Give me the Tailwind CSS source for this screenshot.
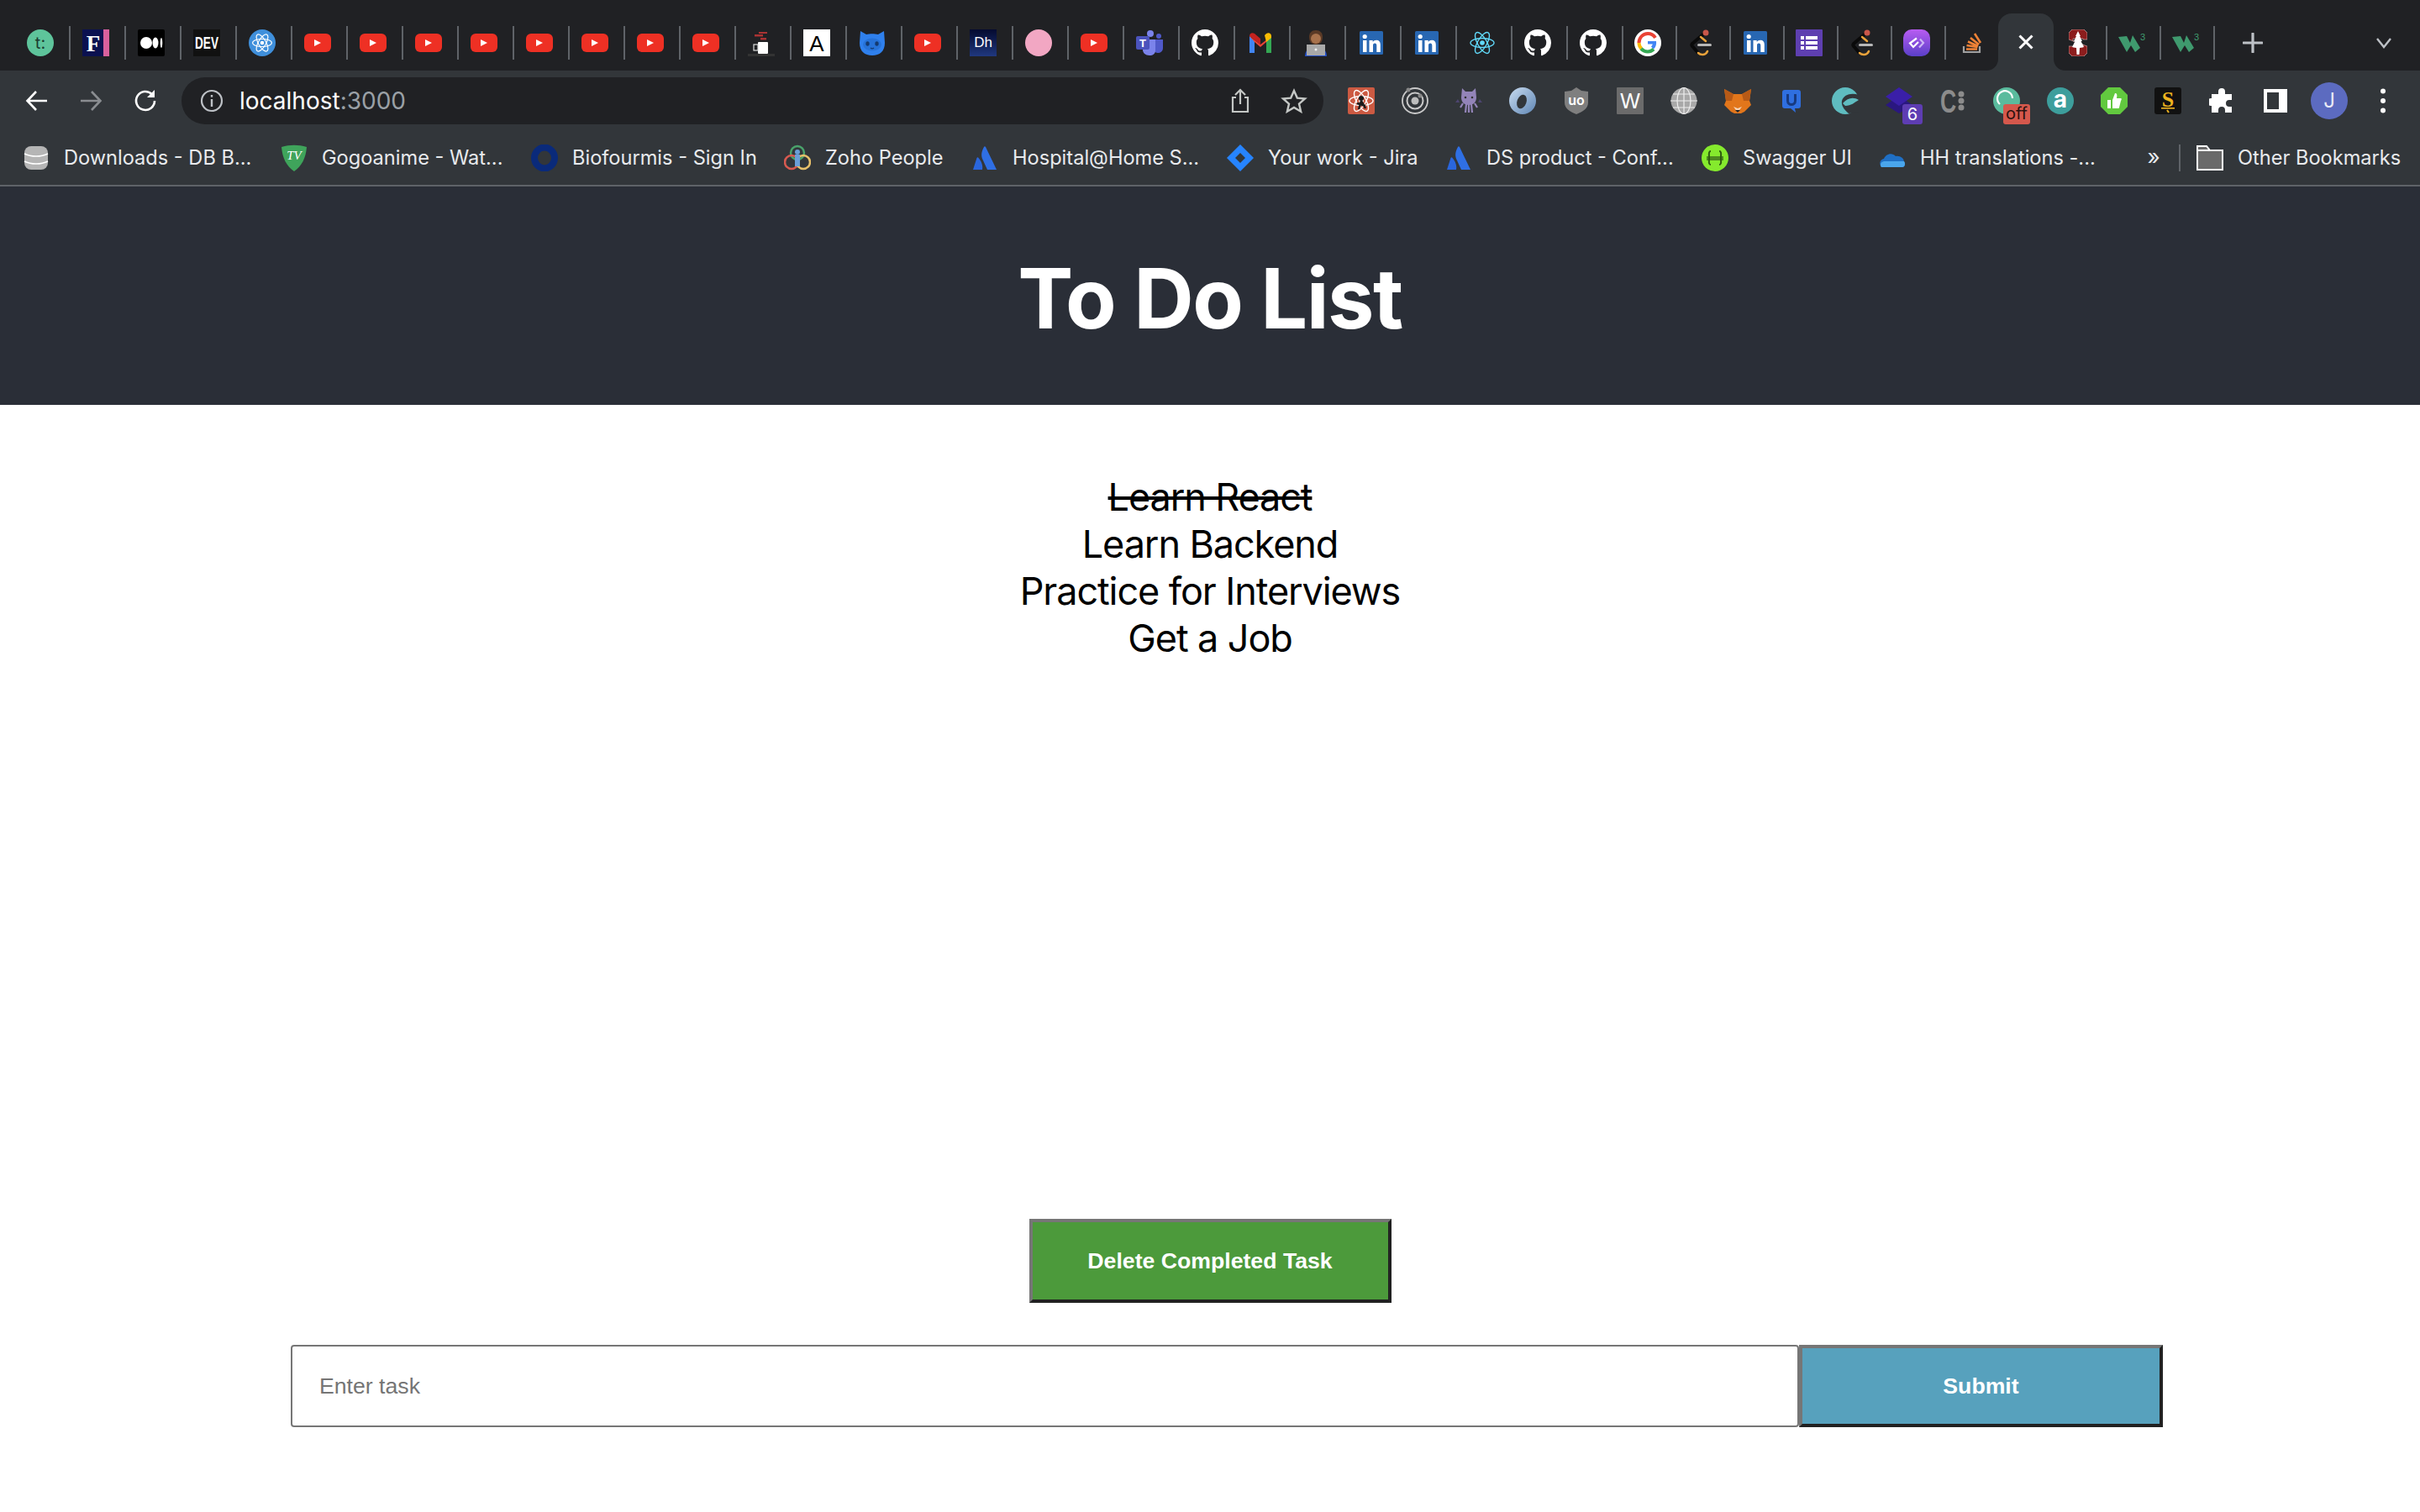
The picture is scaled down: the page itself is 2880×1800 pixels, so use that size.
<!DOCTYPE html>
<html lang="en">
<head>
<meta charset="UTF-8">
<title>To Do List</title>
<script src="https://cdn.jsdelivr.net/npm/@tailwindcss/browser@4"></script>
</head>
<body class="bg-white w-[2880px] h-[1800px] overflow-hidden font-['Inter',sans-serif]">

<svg class="hidden">
  <symbol id="yt" viewBox="0 0 32 32"><rect x="0" y="5" width="32" height="22" rx="6" fill="#ee3024"/><path d="M12 12l8 4-8 4z" fill="#fff"/></symbol>
  <symbol id="gh" viewBox="0 0 16 16"><path fill="#fff" d="M8 0C3.58 0 0 3.58 0 8c0 3.54 2.29 6.53 5.47 7.59.4.07.55-.17.55-.38 0-.19-.01-.82-.01-1.49-2.01.37-2.53-.49-2.69-.94-.09-.23-.48-.94-.82-1.13-.28-.15-.68-.52-.01-.53.63-.01 1.08.58 1.23.82.72 1.21 1.87.87 2.33.66.07-.52.28-.87.51-1.07-1.78-.2-3.64-.89-3.64-3.95 0-.87.31-1.59.82-2.15-.08-.2-.36-1.02.08-2.12 0 0 .67-.21 2.2.82.64-.18 1.32-.27 2-.27.68 0 1.36.09 2 .27 1.53-1.04 2.2-.82 2.2-.82.44 1.1.16 1.92.08 2.12.51.56.82 1.27.82 2.15 0 3.07-1.87 3.75-3.65 3.95.29.25.54.73.54 1.48 0 1.07-.01 1.93-.01 2.2 0 .21.15.46.55.38A8.013 8.013 0 0016 8c0-4.42-3.58-8-8-8z"/></symbol>
  <symbol id="in" viewBox="0 0 32 32"><rect x="2" y="2" width="28" height="28" rx="1.5" fill="#2867b2"/><rect x="6" y="13" width="4.500" height="14" fill="#fff"/><circle cx="8.200" cy="8.500" r="2.600" fill="#fff"/><path d="M13.500 13h4.200v2c1-1.500 2.500-2.300 4.300-2.300 3.200 0 4.800 2 4.800 5.300v9h-4.500v-8c0-1.700-.7-2.600-2.200-2.600s-2.100 1-2.100 2.600v8h-4.500z" fill="#fff"/></symbol>
  <symbol id="gfg" viewBox="0 0 32 32"><path d="M19 5L5 17c-1 1-1 2 0 3l7 8" fill="none" stroke="#0a0a0a" stroke-width="4"/><path d="M15 9l6 5" fill="none" stroke="#e9a23b" stroke-width="2.500" stroke-linecap="round"/><path d="M12 28c3 3 9 3 11-2" fill="none" stroke="#e9a23b" stroke-width="2.500" stroke-linecap="round"/><circle cx="21" cy="4" r="3.500" fill="#c9574a"/><rect x="11" y="17" width="17" height="3" rx="1.500" fill="#b8b8b8"/></symbol>
  <symbol id="w3" viewBox="0 0 32 32"><path d="M0 9L10 8l4 8 3-9 9 15-6 5-5-8-5 8z" fill="#3f9a6e"/><text x="26" y="13" font-family="Liberation Sans" font-size="11" fill="#3f9a6e">3</text></symbol>
  <symbol id="atl" viewBox="0 0 32 32"><path d="M15 3c-3 5-4 11-1 16l5 11h11L17 3c-.6-1-1.500-1-2 0z" fill="#2f6fe4"/><path d="M8.500 16c-.5-1-1.500-1-2 0L2 30h11c1-5-1-10-4.500-14z" fill="#2a66dc"/></symbol>
  <symbol id="react" viewBox="0 0 32 32"><g fill="none" stroke="currentColor" stroke-width="1.400"><ellipse cx="16" cy="16" rx="14" ry="5.500"/><ellipse cx="16" cy="16" rx="14" ry="5.500" transform="rotate(60 16 16)"/><ellipse cx="16" cy="16" rx="14" ry="5.500" transform="rotate(120 16 16)"/></g><circle cx="16" cy="16" r="2.800" fill="currentColor"/></symbol>
</svg>

<!-- browser chrome -->
<div class="bg-[#202124] h-[84px] flex items-center pl-[18px] pt-[17px]">
  <div class="w-[66px] h-[40px] pr-[4px] border-r-2 border-[#5f6368] flex items-center justify-center"><svg width="32" height="32"><circle cx="16" cy="16" r="16" fill="#5ec49b"/><text x="16" y="23" text-anchor="middle" font-family="Inter" font-size="20" fill="#1c3b30">t:</text></svg></div>
  <div class="w-[66px] h-[40px] pr-[4px] border-r-2 border-[#5f6368] flex items-center justify-center"><svg width="32" height="32"><rect width="25" height="32" fill="#0b1150"/><rect x="25" width="7" height="32" fill="#d9609d"/><text x="13" y="26" text-anchor="middle" font-family="Liberation Serif" font-weight="700" font-size="27" fill="#fff">F</text></svg></div>
  <div class="w-[66px] h-[40px] pr-[4px] border-r-2 border-[#5f6368] flex items-center justify-center"><svg width="32" height="32"><rect width="32" height="32" rx="2" fill="#000"/><circle cx="10" cy="16" r="7" fill="#fff"/><ellipse cx="21" cy="16" rx="3.500" ry="6.500" fill="#fff"/><ellipse cx="28" cy="16" rx="1.300" ry="6" fill="#fff"/></svg></div>
  <div class="w-[66px] h-[40px] pr-[4px] border-r-2 border-[#5f6368] flex items-center justify-center"><svg width="32" height="32"><rect width="32" height="32" fill="#111"/><text transform="translate(16 23) scale(.68 1)" text-anchor="middle" font-family="Liberation Sans" font-weight="700" font-size="20" fill="#fff">DEV</text></svg></div>
  <div class="w-[66px] h-[40px] pr-[4px] border-r-2 border-[#5f6368] flex items-center justify-center"><div class="w-[32px] h-[32px] rounded-full bg-[#3f8fdb] flex items-center justify-center text-white"><svg width="26" height="26"><use href="#react"/></svg></div></div>
  <div class="w-[66px] h-[40px] pr-[4px] border-r-2 border-[#5f6368] flex items-center justify-center"><svg width="32" height="32"><use href="#yt"/></svg></div>
  <div class="w-[66px] h-[40px] pr-[4px] border-r-2 border-[#5f6368] flex items-center justify-center"><svg width="32" height="32"><use href="#yt"/></svg></div>
  <div class="w-[66px] h-[40px] pr-[4px] border-r-2 border-[#5f6368] flex items-center justify-center"><svg width="32" height="32"><use href="#yt"/></svg></div>
  <div class="w-[66px] h-[40px] pr-[4px] border-r-2 border-[#5f6368] flex items-center justify-center"><svg width="32" height="32"><use href="#yt"/></svg></div>
  <div class="w-[66px] h-[40px] pr-[4px] border-r-2 border-[#5f6368] flex items-center justify-center"><svg width="32" height="32"><use href="#yt"/></svg></div>
  <div class="w-[66px] h-[40px] pr-[4px] border-r-2 border-[#5f6368] flex items-center justify-center"><svg width="32" height="32"><use href="#yt"/></svg></div>
  <div class="w-[66px] h-[40px] pr-[4px] border-r-2 border-[#5f6368] flex items-center justify-center"><svg width="32" height="32"><use href="#yt"/></svg></div>
  <div class="w-[66px] h-[40px] pr-[4px] border-r-2 border-[#5f6368] flex items-center justify-center"><svg width="32" height="32"><use href="#yt"/></svg></div>
  <div class="w-[66px] h-[40px] pr-[4px] border-r-2 border-[#5f6368] flex items-center justify-center"><svg width="32" height="32"><rect x="13" y="3" width="10" height="2" fill="#a33"/><rect x="8" y="6" width="10" height="2.500" fill="#a33"/><rect x="15" y="10" width="7" height="2.500" fill="#a33"/><rect x="12" y="15" width="12" height="14" rx="1" fill="#fff"/><rect x="7" y="18" width="5" height="7" fill="none" stroke="#ddd" stroke-width="1.200"/><rect y="29" width="32" height="3" fill="#333"/></svg></div>
  <div class="w-[66px] h-[40px] pr-[4px] border-r-2 border-[#5f6368] flex items-center justify-center"><svg width="32" height="32"><rect width="32" height="32" fill="#fff"/><text x="16" y="26" text-anchor="middle" font-family="Liberation Sans" font-size="26" fill="#000">A</text></svg></div>
  <div class="w-[66px] h-[40px] pr-[4px] border-r-2 border-[#5f6368] flex items-center justify-center"><svg width="32" height="32"><path d="M2 2l7 4c4-1 10-1 14 0l7-4 1 14c0 10-6 15-15 15S1 26 1 16z" fill="#2f80ed"/><ellipse cx="16" cy="18" rx="11" ry="7.500" fill="#2672d8"/><ellipse cx="10.500" cy="17" rx="2.200" ry="2.800" fill="#143a70"/><ellipse cx="21.500" cy="17" rx="2.200" ry="2.800" fill="#143a70"/><path d="M14 22c1 1 3 1 4 0" stroke="#143a70" stroke-width="1.300" fill="none"/></svg></div>
  <div class="w-[66px] h-[40px] pr-[4px] border-r-2 border-[#5f6368] flex items-center justify-center"><svg width="32" height="32"><use href="#yt"/></svg></div>
  <div class="w-[66px] h-[40px] pr-[4px] border-r-2 border-[#5f6368] flex items-center justify-center"><div class="w-[32px] h-[32px] bg-linear-to-b from-[#050a30] to-[#20387f] text-white text-[17px] leading-[32px] text-center font-['Liberation_Sans',sans-serif]">Dh</div></div>
  <div class="w-[66px] h-[40px] pr-[4px] border-r-2 border-[#5f6368] flex items-center justify-center"><div class="w-[32px] h-[32px] rounded-full bg-[#f2a7c3]"></div></div>
  <div class="w-[66px] h-[40px] pr-[4px] border-r-2 border-[#5f6368] flex items-center justify-center"><svg width="32" height="32"><use href="#yt"/></svg></div>
  <div class="w-[66px] h-[40px] pr-[4px] border-r-2 border-[#5f6368] flex items-center justify-center"><svg width="32" height="32"><circle cx="17" cy="5" r="4" fill="#7b83eb"/><circle cx="27" cy="8" r="3" fill="#5059c9"/><path d="M21 12h11v10c0 4-3 6-6 6-2 0-5-1-5-5z" fill="#5059c9"/><path d="M8 12h15v13c0 4-3 6-7 6-5 0-8-3-8-7z" fill="#7b83eb"/><rect y="8" width="16" height="16" rx="2" fill="#4b53bc"/><text x="8" y="21" text-anchor="middle" font-family="Liberation Sans" font-weight="700" font-size="13" fill="#fff">T</text></svg></div>
  <div class="w-[66px] h-[40px] pr-[4px] border-r-2 border-[#5f6368] flex items-center justify-center"><svg width="32" height="32"><use href="#gh"/></svg></div>
  <div class="w-[66px] h-[40px] pr-[4px] border-r-2 border-[#5f6368] flex items-center justify-center"><svg width="32" height="32"><path d="M3 28V8l13 10L29 8v20h-6V15l-7 6-7-6v13z" fill="#ea4335"/><path d="M3 28h6V15L3 8z" fill="#4285f4"/><path d="M23 28h6V8l-6 7z" fill="#34a853"/><path d="M29 8c0-3-3-5-6-3l-2 2 2 8 6-5z" fill="#fbbc04"/><path d="M3 8c0-3 3-5 6-3l7 6v7z" fill="#c5221f"/></svg></div>
  <div class="w-[66px] h-[40px] pr-[4px] border-r-2 border-[#5f6368] flex items-center justify-center"><svg width="32" height="32"><path d="M8 9c0-5 3-8 8-8s8 3 8 8-2 9-8 9-8-4-8-9z" fill="#5a3a26"/><circle cx="16" cy="11" r="6" fill="#a8724c"/><path d="M3 32c0-7 5-12 13-12s13 5 13 12z" fill="#2450c9"/><rect x="5" y="18" width="22" height="13" fill="#a9a9a9"/><circle cx="16" cy="24" r="1.500" fill="#eee"/></svg></div>
  <div class="w-[66px] h-[40px] pr-[4px] border-r-2 border-[#5f6368] flex items-center justify-center"><svg width="32" height="32"><use href="#in"/></svg></div>
  <div class="w-[66px] h-[40px] pr-[4px] border-r-2 border-[#5f6368] flex items-center justify-center"><svg width="32" height="32"><use href="#in"/></svg></div>
  <div class="w-[66px] h-[40px] pr-[4px] border-r-2 border-[#5f6368] flex items-center justify-center text-[#61dafb]"><svg width="32" height="32"><use href="#react"/></svg></div>
  <div class="w-[66px] h-[40px] pr-[4px] border-r-2 border-[#5f6368] flex items-center justify-center"><svg width="32" height="32"><use href="#gh"/></svg></div>
  <div class="w-[66px] h-[40px] pr-[4px] border-r-2 border-[#5f6368] flex items-center justify-center"><svg width="32" height="32"><use href="#gh"/></svg></div>
  <div class="w-[64px] h-[40px] pr-[4px] border-r-2 border-[#5f6368] flex items-center justify-center"><svg width="32" height="32"><circle cx="16" cy="16" r="16" fill="#fff"/><path d="M25 10a10.500 10.500 0 0 0-9-5C10 5 5.500 10 5.500 16" fill="none" stroke="#ea4335" stroke-width="4"/><path d="M5.500 16c0 3 1 5 3 7" fill="none" stroke="#fbbc05" stroke-width="4"/><path d="M8 23c2 2 5 3.500 8 3.500 3 0 5-1 7-3" fill="none" stroke="#34a853" stroke-width="4"/><path d="M16 14h10c.5 4-.5 7-3 9.500l-3-3c1-1 1.500-2 1.800-3H16z" fill="#4285f4"/></svg></div>
  <div class="w-[64px] h-[40px] pr-[4px] border-r-2 border-[#5f6368] flex items-center justify-center"><svg width="32" height="32"><use href="#gfg"/></svg></div>
  <div class="w-[64px] h-[40px] pr-[4px] border-r-2 border-[#5f6368] flex items-center justify-center"><svg width="32" height="32"><use href="#in"/></svg></div>
  <div class="w-[64px] h-[40px] pr-[4px] border-r-2 border-[#5f6368] flex items-center justify-center"><svg width="32" height="32"><rect width="32" height="32" rx="1" fill="#5e3fb0"/><rect x="6" y="8" width="4" height="4" fill="#fff"/><rect x="12" y="8" width="14" height="4" fill="#fff"/><rect x="6" y="14" width="4" height="4" fill="#fff"/><rect x="12" y="14" width="14" height="4" fill="#fff"/><rect x="6" y="20" width="4" height="4" fill="#fff"/><rect x="12" y="20" width="14" height="4" fill="#fff"/></svg></div>
  <div class="w-[64px] h-[40px] pr-[4px] border-r-2 border-[#5f6368] flex items-center justify-center"><svg width="32" height="32"><use href="#gfg"/></svg></div>
  <div class="w-[64px] h-[40px] pr-[4px] border-r-2 border-[#5f6368] flex items-center justify-center"><svg width="32" height="32"><defs><linearGradient id="purple" x1="0" y1="0" x2="0" y2="1"><stop offset="0" stop-color="#b85cf2"/><stop offset="1" stop-color="#5a3fc8"/></linearGradient></defs><rect width="32" height="32" rx="10" fill="url(#purple)"/><path d="M16 10.500L8 16.500l4 4.500 6-6" fill="none" stroke="#fff" stroke-width="2.200"/><path d="M19 21.500l5-5.500-4-4.500" fill="none" stroke="#cdb7f5" stroke-width="2.200"/></svg></div>
  <div class="w-[62px] h-[40px] pr-[2px] flex items-center justify-center"><svg width="32" height="32"><path d="M7 20v7h19v-7" fill="none" stroke="#a0a0a0" stroke-width="2.200"/><path d="M10 23.500h13M10.500 19l13 2M12 14.500l12 5.500M15 10l10 8M20 5l7 11" stroke="#ef8236" stroke-width="2.600" fill="none"/></svg></div>
  <!-- active tab -->
  <div class="w-[66px] h-[68px] bg-[#32363a] rounded-t-[16px] flex items-center justify-center relative self-end">
    <svg width="18" height="18"><path d="M1.500 1.500l15 15M16.500 1.500l-15 15" stroke="#fff" stroke-width="3"/></svg>
    <svg width="14" height="14" class="absolute left-[-14px] bottom-0"><path d="M14 0v14H0c8 0 14-6 14-14z" fill="#32363a"/></svg>
    <svg width="14" height="14" class="absolute right-[-14px] bottom-0"><path d="M0 0v14h14C6 14 0 8 0 0z" fill="#32363a"/></svg>
  </div>
  <div class="w-[64px] h-[40px] pr-[4px] border-r-2 border-[#5f6368] flex items-center justify-center"><svg width="22" height="32"><path d="M4 0h14l4 4v8h-5v-1H5v3l17 6v8l-4 4H4l-4-4v-8h5v1h12v-3L0 12V4z" fill="#8c1d1d" stroke="#d8b8b8" stroke-width=".6"/><path d="M11 2l3 6h-1l3 6h-1.500l3.500 7-5 1-.5 8h-3l-.5-8-5-1 3.500-7H6l3-6H8z" fill="#fff"/></svg></div>
  <div class="w-[64px] h-[40px] pr-[4px] border-r-2 border-[#5f6368] flex items-center justify-center"><svg width="32" height="32"><use href="#w3"/></svg></div>
  <div class="w-[64px] h-[40px] pr-[4px] border-r-2 border-[#5f6368] flex items-center justify-center"><svg width="32" height="32"><use href="#w3"/></svg></div>
  <div class="ml-[33px] h-[40px] flex items-center"><svg width="24" height="24"><path d="M12 1v22M1 12h22" stroke="#bdc1c6" stroke-width="3.200" stroke-linecap="round"/></svg></div>
  <div class="ml-[134px] h-[40px] flex items-center"><svg width="20" height="14"><path d="M2 2l8 10 8-10" fill="none" stroke="#bdc1c6" stroke-width="2.400"/></svg></div>
</div>

<div class="bg-[#32363a] h-[72px] flex items-center pl-[30px]">
  <svg width="28" height="28" class="shrink-0"><path d="M26 14H3M13 3L2.500 14 13 25" fill="none" stroke="#fff" stroke-width="2.600"/></svg>
  <svg width="28" height="28" class="ml-[36px] shrink-0"><path d="M2 14h23M15 3l10.500 11L15 25" fill="none" stroke="#8a8d91" stroke-width="2.600"/></svg>
  <svg width="30" height="30" class="ml-[36px] shrink-0"><path d="M26 15a11 11 0 1 1-3.200-7.800" fill="none" stroke="#fff" stroke-width="2.600"/><path d="M26 2v9h-9z" fill="#fff"/></svg>
  <div class="ml-[28px] w-[1359px] shrink-0 h-[56px] bg-[#202124] rounded-full flex items-center pl-[22px] pr-[19px]">
    <svg width="28" height="28"><circle cx="14" cy="14" r="12" fill="none" stroke="#bdc1c6" stroke-width="2.200"/><rect x="12.800" y="12" width="2.400" height="9" fill="#bdc1c6"/><rect x="12.800" y="7" width="2.400" height="2.600" fill="#bdc1c6"/></svg>
    <span class="ml-[19px] text-[28px] leading-none text-white">localhost<span class="text-[#9aa0a6]">:3000</span></span>
    <svg width="24" height="30" class="ml-auto"><path d="M7 11H3v17h18V11h-4M12 19V2M6 8l6-6 6 6" fill="none" stroke="#c4c7c5" stroke-width="2.200"/></svg>
    <svg width="32" height="30" class="ml-[36px]"><path d="M16 3l3.800 8.600 9.200.9-7 6.100 2.100 9.100-8.100-4.800-8.100 4.800 2.100-9.100-7-6.100 9.200-.9z" fill="none" stroke="#c4c7c5" stroke-width="2.400"/></svg>
  </div>
  <div class="flex items-center ml-[13px]">
    <div class="w-[64px] flex justify-center"><svg width="32" height="32" class="text-white"><rect width="32" height="32" rx="2" fill="#cc5a42"/><use href="#react"/><circle cx="16" cy="13" r="3" fill="#1a1a1a"/><path d="M16 16l-3 10M16 16l5 9M11 19l10 3" stroke="#1a1a1a" stroke-width="2.500"/></svg></div>
    <div class="w-[64px] flex justify-center"><svg width="32" height="32"><circle cx="16" cy="16" r="15" fill="none" stroke="#c9c9c9" stroke-width="1.800"/><circle cx="16" cy="16" r="9.500" fill="none" stroke="#c9c9c9" stroke-width="2"/><circle cx="16" cy="16" r="4.500" fill="#bdbdbd"/><circle cx="8" cy="3" r="2.500" fill="#888"/><circle cx="22" cy="10" r="2.500" fill="#888"/></svg></div>
    <div class="w-[64px] flex justify-center"><svg width="32" height="32"><path d="M8 1l4 4h8l4-4 1 11c0 5-3 9-9 9s-9-4-9-9z" fill="#9384b8"/><path d="M3 14l-3 4 5 0M29 14l3 4-5 0" fill="#4d4570"/><path d="M9 19l-3 5M13 20l-1 10M16 20v10M19 20l1 10M23 19l3 5" stroke="#9384b8" stroke-width="2.200"/><circle cx="12" cy="12" r="1.300" fill="#333"/><circle cx="20" cy="12" r="1.300" fill="#333"/></svg></div>
    <div class="w-[64px] flex justify-center"><svg width="32" height="32"><defs><linearGradient id="ring" x1="0" y1="0" x2="1" y2="1"><stop offset="0" stop-color="#c9dcf0"/><stop offset="1" stop-color="#5f86b4"/></linearGradient></defs><circle cx="16" cy="16" r="16" fill="url(#ring)"/><ellipse cx="15" cy="17" rx="5.500" ry="8.500" transform="rotate(20 15 17)" fill="#32363a"/></svg></div>
    <div class="w-[64px] flex justify-center"><svg width="32" height="32"><path d="M16 0l6 4 8 1v13c0 7-6 11-14 14C8 29 2 25 2 18V5l8-1z" fill="#7f7f7f"/><text x="16" y="21" text-anchor="middle" font-family="Inter" font-weight="600" font-size="16" fill="#fff">uo</text></svg></div>
    <div class="w-[64px] flex justify-center"><svg width="32" height="32"><rect width="32" height="32" rx="1" fill="#6b6b6b"/><text x="16" y="25" text-anchor="middle" font-family="Liberation Sans" font-size="25" fill="#fff">W</text></svg></div>
    <div class="w-[64px] flex justify-center"><svg width="32" height="32"><circle cx="16" cy="16" r="15.500" fill="#a8a8a8"/><g fill="none" stroke="#eee" stroke-width="1.200"><ellipse cx="16" cy="16" rx="8" ry="15.500"/><path d="M16 0v32M3 8h26M0 16h32M3 24h26"/></g></svg></div>
    <div class="w-[64px] flex justify-center"><svg width="32" height="32"><path d="M0 2l11 6h10l11-6-2 14 2 5-8 8-4 2h-8l-4-2-8-8 2-5z" fill="#e2761b"/><path d="M0 2l11 6-2 8-7 0zM32 2l-11 6 2 8 7 0z" fill="#b85a16"/><path d="M11 23l5 7 5-7-5 2z" fill="#f5d3b5"/><path d="M13 27h6l-3 3z" fill="#222"/></svg></div>
    <div class="w-[64px] flex justify-center"><svg width="32" height="32"><path d="M8 3h16c2 0 3 1 3 3v16c0 2-1 3-3 3h-4l1 5-6-5H8c-2 0-3-1-3-3V6c0-2 1-3 3-3z" fill="#2f6fe0"/><path d="M11.500 8v8c0 6 9 6 9 0V8" fill="none" stroke="#173a80" stroke-width="3"/></svg></div>
    <div class="w-[64px] flex justify-center"><svg width="32" height="32"><circle cx="16" cy="16" r="16" fill="#5fbcc0"/><path d="M32 9C24 6 14 8 12 16c-1 5 2 10 8 15l12-1z" fill="#32363a"/><path d="M13 19c6-7 13-8 19-4-5 3-9 7-16 7z" fill="#5fbcc0"/></svg></div>
    <div class="w-[64px] flex justify-center relative"><svg width="32" height="32"><path d="M16 10l16 11-16 10L0 21z" fill="#2a1780"/><path d="M16 0l16 11-16 11L0 11z" fill="#3a1fa8"/></svg><span class="absolute left-[36px] top-[20px] w-[24px] h-[24px] rounded-[3px] bg-[#5e3db3] text-white text-[20px] leading-[24px] text-center">6</span></div>
    <div class="w-[64px] flex justify-center"><svg width="30" height="32"><text transform="translate(0 30) scale(.7 1)" font-family="Liberation Sans" font-weight="700" font-size="38" fill="#8c8c8c">C</text><circle cx="25" cy="8" r="3.500" fill="#8c8c8c"/><circle cx="25" cy="16" r="3.500" fill="#8c8c8c"/><circle cx="25" cy="24" r="3.500" fill="#8c8c8c"/></svg></div>
    <div class="w-[64px] flex justify-center relative"><svg width="32" height="32"><circle cx="16" cy="16" r="16" fill="#5abb9d"/><path d="M8 20a9 9 0 1 1 15-7" fill="none" stroke="#fff" stroke-width="2.200"/></svg><span class="absolute left-[28px] top-[20px] w-[32px] h-[24px] rounded-[3px] bg-[#d5584c] text-[#2a1210] text-[20px] leading-[22px] text-center">off</span></div>
    <div class="w-[64px] flex justify-center"><div class="w-[32px] h-[32px] rounded-full bg-[#3d9e9c] text-white text-[28px] font-bold leading-[28px] text-center">a</div></div>
    <div class="w-[64px] flex justify-center"><svg width="32" height="32"><path d="M9 0h14l9 9v14l-9 9H9l-9-9V9z" fill="#62c93f"/><path d="M8 15h4v10H8zM14 15l3-8c2 0 3 1 2 6h5c1 0 1 2 0 3l-2 8c0 1-1 1-2 1h-6z" fill="#fff"/></svg></div>
    <div class="w-[64px] flex justify-center"><svg width="32" height="32"><rect width="32" height="32" rx="3" fill="#111"/><text x="16" y="23" text-anchor="middle" font-family="Liberation Serif" font-weight="700" font-size="26" fill="#eeb31f">S</text><rect x="8" y="24" width="16" height="1.600" fill="#eeb31f"/><path d="M15 27l2 3" stroke="#eeb31f" stroke-width="2"/></svg></div>
    <div class="w-[64px] flex justify-center"><svg width="30" height="30"><path d="M11 4a4 4 0 0 1 8 0v3h8v7h-3a4 4 0 0 0 0 8h3v7H19v-3a4 4 0 0 0-8 0v3H3V21h-1a4.500 4.500 0 0 1 0-9h1V7h8z" fill="#fff"/></svg></div>
    <div class="w-[64px] flex justify-center"><div class="w-[28px] h-[28px] border-[4px] border-r-[10px] border-white bg-[#32363a]"></div></div>
    <div class="w-[64px] flex justify-center"><div class="w-[44px] h-[44px] rounded-full bg-[#5c6bc0] text-[#e8eaf6] text-[24px] leading-[44px] text-center">J</div></div>
    <div class="w-[64px] flex justify-center"><svg width="8" height="30"><circle cx="4" cy="3.500" r="3" fill="#fff"/><circle cx="4" cy="15" r="3" fill="#fff"/><circle cx="4" cy="26.500" r="3" fill="#fff"/></svg></div>
  </div>
</div>

<div class="bg-[#32363a] h-[64px] flex items-center text-[23.6px] text-[#e8eaed] border-b-2 border-[#5f6368] box-content">
  <div class="w-[334px] pl-[28px] flex items-center gap-[16px] shrink-0"><svg width="32" height="32"><rect x="1" y="2" width="28" height="28" rx="8" fill="#b5b5b5"/><path d="M1 11c8 4 20 4 28 0M1 20c8 4 20 4 28 0" fill="none" stroke="#fff" stroke-width="1.500"/></svg><span class="whitespace-nowrap">Downloads - DB B...</span></div>
  <div class="w-[298px] flex items-center gap-[17px] shrink-0"><svg width="32" height="32"><path d="M1 3c10-3 20-3 30 0-1 13-6 23-15 29C7 26 2 16 1 3z" fill="#3fa45b"/><text x="16" y="18" text-anchor="middle" font-family="Liberation Serif" font-style="italic" font-size="15" fill="#fff">TV</text></svg><span class="whitespace-nowrap">Gogoanime - Wat...</span></div>
  <div class="w-[301px] flex items-center gap-[17px] shrink-0"><svg width="32" height="32"><ellipse cx="16" cy="16" rx="12" ry="12.500" fill="none" stroke="#0a2a7a" stroke-width="8"/></svg><span class="whitespace-nowrap">Biofourmis - Sign In</span></div>
  <div class="w-[223px] flex items-center gap-[17px] shrink-0"><svg width="32" height="32"><circle cx="16" cy="10" r="8" fill="#32363a" stroke="#4aa36b" stroke-width="2.500"/><circle cx="9" cy="21" r="8" fill="none" stroke="#d85a50" stroke-width="2.500"/><circle cx="23" cy="21" r="8" fill="none" stroke="#e8c06a" stroke-width="2.500"/><circle cx="16" cy="9" r="3" fill="#6a9fd8"/><path d="M16 12v14" stroke="#6a9fd8" stroke-width="6"/></svg><span class="whitespace-nowrap">Zoho People</span></div>
  <div class="w-[304px] flex items-center gap-[17px] shrink-0"><svg width="32" height="32"><use href="#atl"/></svg><span class="whitespace-nowrap">Hospital@Home S...</span></div>
  <div class="w-[260px] flex items-center gap-[17px] shrink-0"><svg width="32" height="32"><path d="M16 0l16 16-16 16L0 16z" fill="#2684ff"/><path d="M16 10l6 6-6 6-6-6z" fill="#32363a"/></svg><span class="whitespace-nowrap">Your work - Jira</span></div>
  <div class="w-[305px] flex items-center gap-[17px] shrink-0"><svg width="32" height="32"><use href="#atl"/></svg><span class="whitespace-nowrap">DS product - Conf...</span></div>
  <div class="w-[211px] flex items-center gap-[17px] shrink-0"><svg width="32" height="32"><circle cx="16" cy="16" r="16" fill="#85ea2d"/><rect x="6" y="14" width="20" height="5" fill="#4d8a1f"/><path d="M11 8c-3 0-2 4-2 8s-1 8 2 8M21 8c3 0 2 4 2 8s1 8-2 8" fill="none" stroke="#2e5a10" stroke-width="2"/></svg><span class="whitespace-nowrap">Swagger UI</span></div>
  <div class="w-[300px] flex items-center gap-[17px] shrink-0"><svg width="32" height="32"><path d="M3 27c-3-4-2-9 3-10 2-6 10-8 14-3 5-1 10 2 10 7 2 2 1 6-2 6z" fill="#1f6fc4"/><path d="M3 27c-2-3-1-6 3-7h24c2 2 1 7-2 7z" fill="#4aa6ec"/></svg><span class="whitespace-nowrap">HH translations -...</span></div>
  <span class="w-[54px] text-[26px] shrink-0 text-center -mt-[3px]">»</span>
  <div class="ml-[3px] w-[2px] h-[32px] bg-[#5f6368] shrink-0"></div>
  <div class="ml-[19px] flex items-center gap-[17px] shrink-0"><svg width="32" height="30"><path d="M1 29V1h11l4 5h15v23z" fill="#6a6a6a" stroke="#fff" stroke-width="2"/><path d="M1 6h15" stroke="#fff" stroke-width="2"/></svg><span class="whitespace-nowrap">Other Bookmarks</span></div>
</div>

<!-- app -->
<header class="bg-[#2a2e37] h-[260px] flex items-center justify-center pt-[6px]">
  <h1 class="text-[99px] font-bold text-white leading-none tracking-[-1.500px]">To Do List</h1>
</header>

<main class="flex flex-col items-center pt-[82px]">
  <ul class="text-[45px] leading-[56px] tracking-[-1.100px] text-black text-center">
    <li class="line-through">Learn React</li>
    <li>Learn Backend</li>
    <li>Practice for Interviews</li>
    <li>Get a Job</li>
  </ul>
  <button class="mt-[663px] w-[431px] h-[100px] bg-[#4c9a3b] text-white text-[26.67px] font-bold font-['Liberation_Sans',sans-serif] border-4 border-t-[#767676] border-l-[#767676] border-r-[#212121] border-b-[#212121]">Delete Completed Task</button>
  <form class="mt-[50px] self-start ml-[346px] flex">
    <input type="text" placeholder="Enter task" class="w-[1795px] h-[98px] border-2 border-[#767676] rounded-[4px] pl-[32px] text-[26.67px] font-['Liberation_Sans',sans-serif] placeholder:text-[#757575]">
    <button type="button" class="w-[433px] h-[98px] bg-[#57a1bd] text-white text-[26.67px] font-bold font-['Liberation_Sans',sans-serif] border-4 border-t-[#767676] border-l-[#767676] border-r-[#212121] border-b-[#212121]">Submit</button>
  </form>
</main>
</body>
</html>
